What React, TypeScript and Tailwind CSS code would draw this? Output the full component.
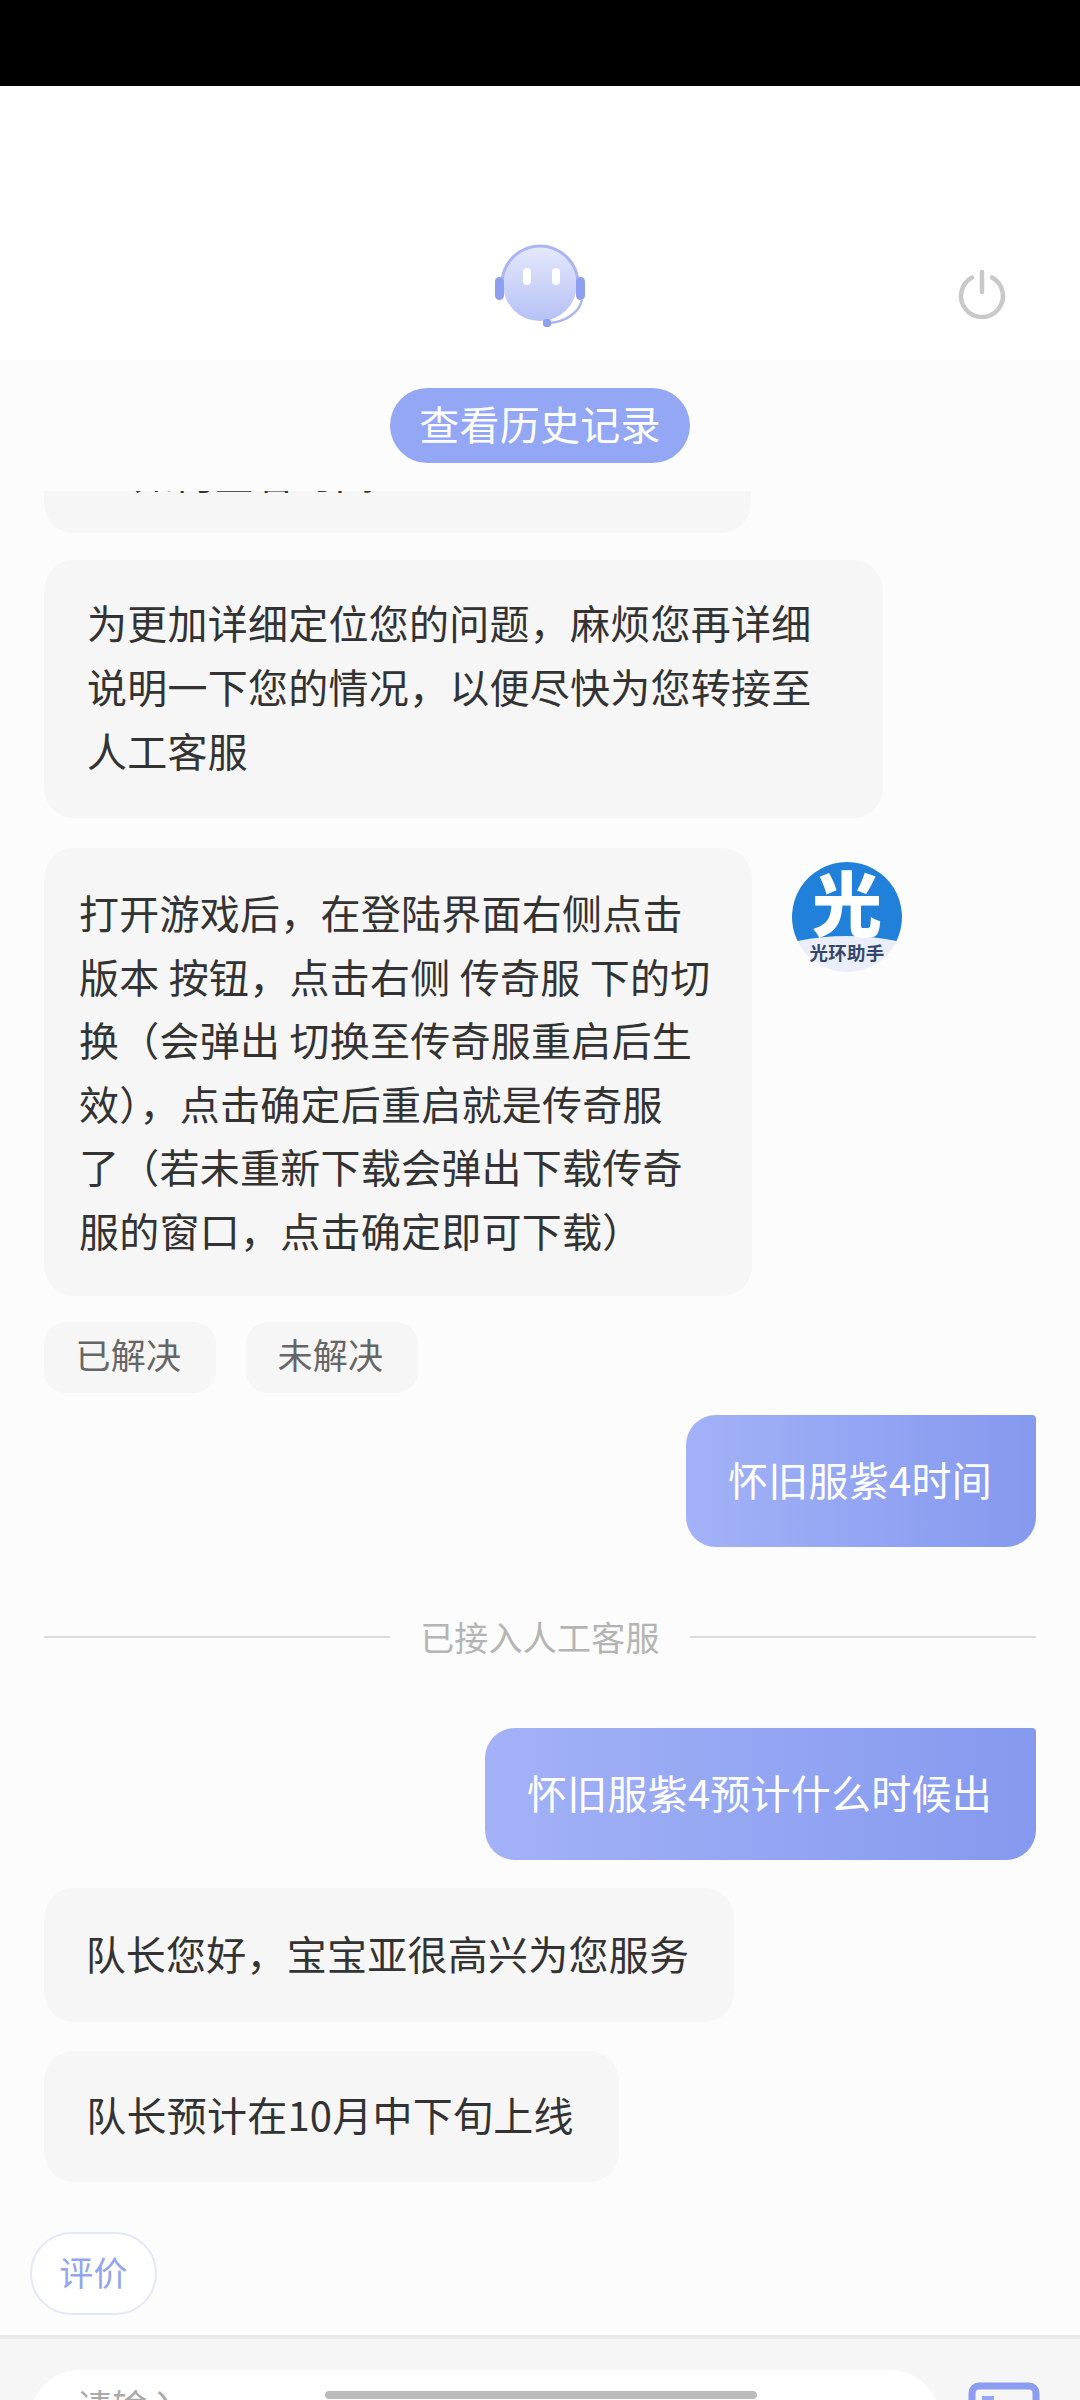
import { FC, ReactNode } from "react";

const font = "font-['Noto_Sans_CJK_SC','Noto_Sans',sans-serif]";

const guideLines = [
	"打开游戏后，在登陆界面右侧点击",
	"版本 按钮，点击右侧 传奇服 下的切",
	"换（会弹出 切换至传奇服重启后生",
	"效），点击确定后重启就是传奇服",
	"了（若未重新下载会弹出下载传奇",
	"服的窗口，点击确定即可下载）",
];

const detailLines = ["为更加详细定位您的问题，麻烦您再详细", "说明一下您的情况，以便尽快为您转接至", "人工客服"];

const RobotIcon = () => (
	<svg width="100" height="100" viewBox="0 0 100 100" fill="none">
		<defs>
			<linearGradient id="face" x1="0" y1="0" x2="0" y2="1">
				<stop offset="0" stopColor="#e4e8fc" />
				<stop offset="1" stopColor="#b6c1f5" />
			</linearGradient>
		</defs>
		<circle cx="50" cy="46" r="37" fill="url(#face)" />
		<path d="M12 46a38 38 0 0 1 76 0" stroke="#a9b6f3" strokeWidth="3" />
		<rect x="5" y="39" width="9" height="23" rx="4.5" fill="#8e9ff0" />
		<rect x="86" y="39" width="9" height="23" rx="4.5" fill="#8e9ff0" />
		<path d="M92 62c-3 13-17 22-33 23" stroke="#a9b6f3" strokeWidth="2.5" />
		<rect x="53" y="81" width="8" height="8" rx="3" fill="#8e9ff0" />
		<rect x="33" y="30" width="8" height="17" rx="4" fill="#fff" />
		<rect x="62" y="30" width="8" height="17" rx="4" fill="#fff" />
	</svg>
);

const PowerIcon = () => (
	<svg width="56" height="56" viewBox="0 0 56 56" fill="none" stroke="#c9c9c9" strokeWidth="4.5" strokeLinecap="round">
		<path d="M28 8v20" />
		<path d="M18 13.500A21 21 0 1 0 38 13.500" />
	</svg>
);

const HelperLogo = () => (
	<svg width="112" height="112" viewBox="0 0 112 112">
		<circle cx="56" cy="56" r="55" fill="#e9eef8" />
		<path d="M6.500 80A55 55 0 1 1 105.500 80Q56 70 6.500 80Z" fill="#2180d9" />
		<text x="56" y="70" textAnchor="middle" fontSize="70" fontWeight="900" fill="#fff" fontFamily="Noto Sans CJK SC">
			光
		</text>
		<text x="56" y="99" textAnchor="middle" fontSize="18.500" fontWeight="700" fill="#36466a" fontFamily="Noto Sans CJK SC">
			光环助手
		</text>
	</svg>
);

const ImageIcon = () => (
	<svg width="72" height="72" viewBox="0 0 72 72" fill="none">
		<rect x="4" y="4" width="64" height="64" rx="7" stroke="#8c9cf0" strokeWidth="7" />
		<rect x="14" y="14" width="12" height="12" fill="#97a6f2" />
	</svg>
);

const LeftBubble: FC<{ children: ReactNode; className: string }> = ({ children, className }) => (
	<div className={`rounded-[30px] bg-[#f6f6f6] text-[#333] ${className}`}>{children}</div>
);

const RightBubble: FC<{ text: string; width: string }> = ({ text, width }) => (
	<div
		className={`ml-auto flex h-[132px] items-center justify-center rounded-[30px] rounded-tr-[4px] bg-gradient-to-r from-[#a3b2f7] to-[#8599ee] pb-[4px] pr-[2px] text-white ${width}`}
	>
		{text}
	</div>
);

const App = () => {
	return (
		<div className={`flex h-[2400px] w-[1080px] flex-col overflow-hidden bg-white text-[40px] tracking-[0.25px] ${font}`}>
			<div className="h-[86px] shrink-0 bg-black"></div>
			<header className="flex h-[274px] shrink-0 items-start justify-between bg-white pt-[150px]">
				<div className="w-[126px]"></div>
				<div className="mt-[2px]">
					<RobotIcon />
				</div>
				<div className="mr-[70px] mt-[28px]">
					<PowerIcon />
				</div>
			</header>

			<main className="flex h-[1975px] shrink-0 flex-col bg-[#fcfcfc] px-[44px]">
				<button className="mx-auto mt-[28px] flex h-[75px] w-[300px] shrink-0 items-center justify-center rounded-full bg-[#94a7f4] pb-[5px] text-white">
					查看历史记录
				</button>

				<LeftBubble className="mt-[28px] h-[42px] w-[707px] shrink-0 overflow-hidden rounded-t-none">
					<div className="-mt-[51px] h-[64px] whitespace-nowrap pl-[40px] leading-[64px]">· 如何查看时间</div>
				</LeftBubble>

				<LeftBubble className="mt-[27px] w-[839px] shrink-0 pb-[36px] pl-[43px] pt-[30px] leading-[64px]">
					{detailLines.map(line => (
						<div key={line} className="whitespace-nowrap">
							{line}
						</div>
					))}
				</LeftBubble>

				<div className="mt-[30px] flex shrink-0 items-start">
					<LeftBubble className="w-[708px] pb-[34px] pl-[35px] pt-[33px] leading-[63.500px]">
						{guideLines.map(line => (
							<div key={line} className="whitespace-pre">
								{line}
							</div>
						))}
					</LeftBubble>
					<div className="ml-[39px] mt-[13px]">
						<HelperLogo />
					</div>
				</div>

				<div className="mt-[26px] flex shrink-0 gap-[30px] text-[35px] text-[#666]">
					<div className="flex h-[71px] w-[172px] items-center justify-center rounded-[22px] bg-[#f6f6f6] pb-[7px] pr-[3px]">
						已解决
					</div>
					<div className="flex h-[71px] w-[172px] items-center justify-center rounded-[22px] bg-[#f6f6f6] pb-[7px] pr-[3px]">
						未解决
					</div>
				</div>

				<div className="mt-[22px] shrink-0">
					<RightBubble text="怀旧服紫4时间" width="w-[350px]" />
				</div>

				<div className="mt-[74px] flex h-[32px] shrink-0 items-center gap-[30px] text-[34px] text-[#b4b4b4]">
					<div className="h-[2px] flex-1 bg-[#dcdcdc]"></div>
					<span className="-mt-[2px] whitespace-nowrap">已接入人工客服</span>
					<div className="h-[2px] flex-1 bg-[#dcdcdc]"></div>
				</div>

				<div className="mt-[75px] shrink-0">
					<RightBubble text="怀旧服紫4预计什么时候出" width="w-[551px]" />
				</div>

				<LeftBubble className="mt-[28px] flex h-[134px] w-[690px] shrink-0 items-center justify-center pb-[5px] pr-[3px]">
					队长您好，宝宝亚很高兴为您服务
				</LeftBubble>

				<LeftBubble className="mt-[29px] flex h-[131px] w-[575px] shrink-0 items-center justify-center pb-[5px] pr-[3px]">
					队长预计在10月中下旬上线
				</LeftBubble>

				<button className="-ml-[14px] mt-[50px] flex h-[83px] w-[127px] shrink-0 items-center justify-center rounded-[42px] border-2 border-[#e3e7fa] bg-white pb-[5px] text-[34px] text-[#94a5ee]">
					评价
				</button>
			</main>

			<footer className="relative flex h-[65px] shrink-0 items-start border-t-[4px] border-[#e8e8e8] bg-[#f6f6f6] pl-[30px] pt-[31px]">
				<div className="h-[100px] w-[910px] shrink-0 rounded-[50px] bg-white pl-[47px] pt-[10px] text-[35px] leading-[50px] text-[#aaa]">
					请输入
				</div>
				<div className="ml-[28px] mt-[12px] shrink-0">
					<ImageIcon />
				</div>
				<div className="absolute left-[325px] top-[52px] h-[8px] w-[432px] rounded-full bg-[#bbb]"></div>
			</footer>
		</div>
	);
};

export default App;
